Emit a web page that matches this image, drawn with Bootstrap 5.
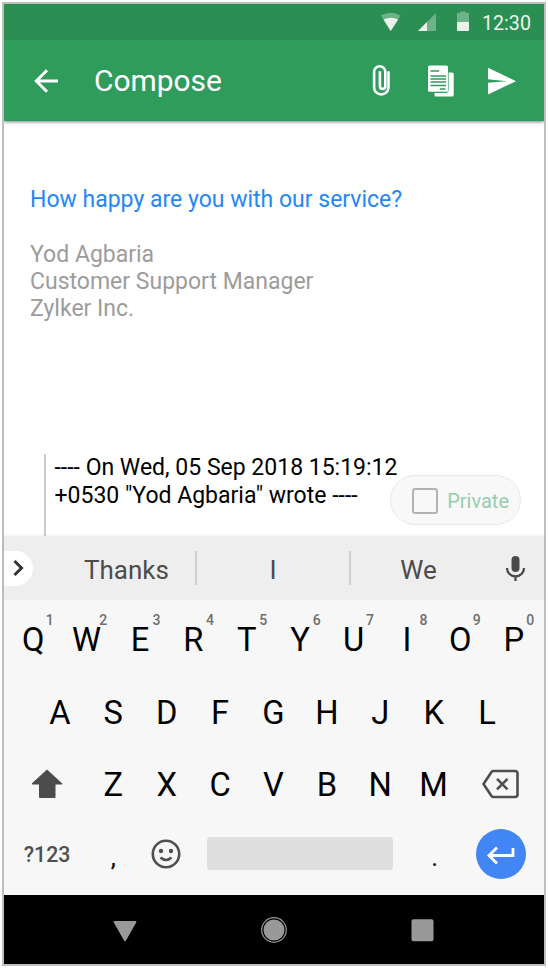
<!DOCTYPE html>
<html lang="en">
<head>
<meta charset="utf-8">
<meta name="viewport" content="width=device-width, initial-scale=1">
<title>Compose</title>
<link href="https://cdn.jsdelivr.net/npm/bootstrap@5.3.0/dist/css/bootstrap.min.css" rel="stylesheet">
<style>
body{font-family:Roboto,"Liberation Sans",sans-serif;background:#fff;color:#000;overflow:hidden}
.phone{width:544px;height:964px;margin:2px;border:2px solid #bfbfbf}
svg{display:block;flex:none}
.status{height:36px;background:#2b8f53;color:#e9f3ec;font-size:19.7px;padding-right:13px}
.status span{padding-top:3px}
.appbar{height:81px;background:#2f9c5c;color:#fff;box-shadow:0 1px 3px rgba(0,0,0,.5);clip-path:inset(0 0 -6px 0);z-index:1;padding:0 26px 0 28px}
.appbar h1{font-size:29.9px;margin-left:34px;line-height:1}
.mail{height:415px;padding:65px 0 0 26px;font-size:23px;line-height:27.4px}
.ask{color:#2587f5}
.sig{color:#9c9c9c;margin-top:27.2px}
.quote{height:82px;margin:131px 0 0 14px;border-left:2px solid #ccc;padding:.6px 0 0 8.5px;width:370px}
.private{right:23px;bottom:11px;width:131px;height:50px;border:1px solid #e8e8e8;border-radius:25px;background:#f8f8f8;color:#96cdae;font-size:20px;padding:1px 11px 0 21px}
.private b{padding-top:3px}
.tick{width:26px;height:26px;border:2.5px solid #b3b3b3;border-radius:3px}
.suggest{height:64px;background:#eee;color:#4c4c4c;font-size:26px;box-shadow:0 -1px 3px rgba(0,0,0,.06);z-index:1}
.more{width:29px;height:35px;background:#fff;border-radius:0 18px 18px 0;padding-left:9px}
.words{margin-right:18px}
.word{width:154px;height:34px;padding-top:4px}
.word.first{width:137px}
.word.third{width:137px}
.word+.word{border-left:2px solid #d0d0d0}
.keys{height:295px;background:#f7f7f7;padding:3px 2.5px 0}
.krow{height:72.5px}
.krow.last{height:66px}
.key{width:53.4px;font-size:32.7px;line-height:1;padding-top:2px}
.krow.home{padding-right:1px}
.krow.home .key{padding-top:3.500px}
.wide{width:80.1px}
.key sup{top:9.5px;right:6.2px;font-size:14px;font-weight:500;color:#6e6e6e;line-height:1}
.mode{width:80.1px;font-size:21.3px;font-weight:500;color:#4f4f4f;padding:3px 0 0 1px}
.punct{font-size:26px;padding-top:7px}
.smile{padding:0 1px 0 0}
.space{width:186px;height:33px;background:#dfdfdf;border-radius:4px;margin-left:13.5px}
.enter{width:50px;height:50px;background:#4286f5}
.navkeys{height:69px;background:#000}
</style>
</head>
<body>
<main class="phone d-flex flex-column position-relative">
  <div class="status d-flex align-items-center justify-content-end">
    <svg width="102" height="36" viewBox="0 0 102 36">
      <path d="M1 11.500Q11 6 20.500 11.500L10.700 27z" fill="#6fb289"/>
      <path d="M3.500 15.600Q10.700 12 18.200 15.600L10.700 27z" fill="#e9f3ec"/>
      <path d="M56 9v18H38z" fill="#6fb289"/><path d="M47 18v9h-9z" fill="#e9f3ec"/>
      <path d="M77 9h3V7.500h6V9h3v9H77z" fill="#6fb289"/>
      <path d="M77 18h12v8a1 1 0 0 1-1 1H78a1 1 0 0 1-1-1z" fill="#e9f3ec"/>
    </svg>
    <span>12:30</span>
  </div>
  <header class="appbar d-flex align-items-center position-relative">
    <svg width="28" height="28" viewBox="0 0 28 28" fill="none" stroke="#fff" stroke-width="3"><path d="M26 14H4.500M15 3.300L4.300 14 15 24.700"/></svg>
    <h1 class="fw-normal mb-0 me-auto">Compose</h1>
    <svg width="150" height="36" viewBox="0 0 150 36">
      <path d="M20.500 9v16a7.200 7.200 0 0 1-14.400 0V9.500a5.600 5.600 0 0 1 11.200 0v14.500a2.700 2.700 0 0 1-5.400 0V9" transform="translate(0 -.7)" fill="none" stroke="#fff" stroke-width="2.600"/>
      <path d="M66.500 30v2q0 1.500 1.500 1.500h16.200q1.500 0 1.500-1.500V11q0-1.500-1.500-1.500H79V30z" fill="#fff"/>
      <path d="M61.500 2.500h17q1.500 0 1.500 1.500v23.300q0 1.500-1.500 1.500h-17Q60 28.800 60 27.300V4Q60 2.500 61.500 2.500z" fill="#fff" stroke="#2f9c5c" stroke-width="1.200" paint-order="stroke"/>
      <path d="M62.500 8h8.500M62.500 13h15.500M62.500 16h15.500M62.500 19h15.500M62.500 22.500h15.500M72 26h5.500" stroke="#2f9c5c" stroke-width="1.300"/>
      <path d="M120 4.800L148 18.200 120 31.500V19.700L139 18.200 120 16.200z" fill="#fff"/>
    </svg>
  </header>
  <section class="mail position-relative">
    <div class="ask">How happy are you with our service?</div>
    <div class="sig">Yod Agbaria<br>Customer Support Manager<br>Zylker Inc.</div>
    <div class="quote text-nowrap">---- On Wed, 05 Sep 2018 15:19:12<br>+0530 "Yod Agbaria" wrote ----</div>
    <label class="private position-absolute d-flex align-items-center justify-content-between"><span class="tick"></span><b class="fw-normal">Private</b></label>
  </section>
  <div class="suggest d-flex align-items-center position-relative">
    <div class="more d-flex align-items-center"><svg width="12" height="18" viewBox="0 0 12 18" fill="none" stroke="#333" stroke-width="3"><path d="M1.500 2L8.500 9l-7 7"/></svg></div>
    <div class="words d-flex ms-auto">
      <div class="word first d-flex align-items-center justify-content-center">Thanks</div>
      <div class="word d-flex align-items-center justify-content-center">I</div>
      <div class="word third d-flex align-items-center justify-content-center">We</div>
    </div>
    <svg width="40" height="36" viewBox="0 0 40 36"><rect x="7.500" y="6" width="8" height="16" rx="4" fill="#4a4a4a"/><path d="M3 18a8.500 8.500 0 0 0 17 0M11.500 26v5" fill="none" stroke="#4a4a4a" stroke-width="2.300"/></svg>
  </div>
  <section class="keys">
    <div class="krow d-flex align-items-stretch">
      <div class="key d-flex align-items-center justify-content-center position-relative">Q<sup class="position-absolute">1</sup></div>
      <div class="key d-flex align-items-center justify-content-center position-relative">W<sup class="position-absolute">2</sup></div>
      <div class="key d-flex align-items-center justify-content-center position-relative">E<sup class="position-absolute">3</sup></div>
      <div class="key d-flex align-items-center justify-content-center position-relative">R<sup class="position-absolute">4</sup></div>
      <div class="key d-flex align-items-center justify-content-center position-relative">T<sup class="position-absolute">5</sup></div>
      <div class="key d-flex align-items-center justify-content-center position-relative">Y<sup class="position-absolute">6</sup></div>
      <div class="key d-flex align-items-center justify-content-center position-relative">U<sup class="position-absolute">7</sup></div>
      <div class="key d-flex align-items-center justify-content-center position-relative">I<sup class="position-absolute">8</sup></div>
      <div class="key d-flex align-items-center justify-content-center position-relative">O<sup class="position-absolute">9</sup></div>
      <div class="key d-flex align-items-center justify-content-center position-relative">P<sup class="position-absolute">0</sup></div>
    </div>
    <div class="krow home d-flex justify-content-center align-items-center text-center">
      <div class="key">A</div><div class="key">S</div><div class="key">D</div><div class="key">F</div><div class="key">G</div><div class="key">H</div><div class="key">J</div><div class="key">K</div><div class="key">L</div>
    </div>
    <div class="krow d-flex align-items-center text-center">
      <div class="wide d-flex justify-content-center"><svg width="32" height="30" viewBox="0 0 32 30"><path d="M16 .5L31 14.300q1 1.300-.5 1.300h-6v12.500q0 1-1 1H9q-1 0-1-1V15.600H1.500q-1.500 0-.500-1.300z" fill="#4c4c4c"/></svg></div>
      <div class="key">Z</div><div class="key">X</div><div class="key">C</div><div class="key">V</div><div class="key">B</div><div class="key">N</div><div class="key">M</div>
      <div class="wide d-flex justify-content-center"><svg width="38" height="30" viewBox="0 0 38 30" fill="none" stroke="#4f4f4f" stroke-width="2.600" stroke-linejoin="round"><path d="M12 2h22a2.500 2.500 0 0 1 2.500 2.500v21A2.500 2.500 0 0 1 34 28H12q-1 0-1.500-1L2.500 15 10.500 3q.5-1 1.500-1zM16 9.800l10.500 10.500M26.500 9.800L16 20.300"/></svg></div>
    </div>
    <div class="krow last d-flex align-items-center text-center">
      <div class="mode">?123</div>
      <div class="key punct">,</div>
      <div class="key smile d-flex justify-content-center"><svg width="30" height="30" viewBox="0 0 30 30" fill="none" stroke="#4f4f4f" stroke-width="2.600"><circle cx="15" cy="15" r="13.200"/><path d="M9.500 18.500q5.500 5 11 0"/><g fill="#4f4f4f" stroke="none"><circle cx="10" cy="12" r="2.200"/><circle cx="20" cy="12" r="2.200"/></g></svg></div>
      <div class="space"></div>
      <div class="key punct ms-auto">.</div>
      <div class="wide d-flex justify-content-center"><div class="enter rounded-circle d-flex align-items-center justify-content-center"><svg width="28" height="20" viewBox="0 0 28 20" fill="none" stroke="#fff" stroke-width="2.800"><path d="M26 4v7.500H2.500M10 3.500l-8 8 8 8"/></svg></div></div>
    </div>
  </section>
  <nav class="navkeys d-flex align-items-center justify-content-center">
    <svg width="324" height="28" viewBox="0 0 324 28" fill="#999">
      <path d="M2.500 5h21q1.500 0 .7 1.500L14 24.500q-1 1.500-2 0L1.800 6.500Q1 5 2.500 5z"/>
      <circle cx="162" cy="14" r="12.300" fill="none" stroke="#999" stroke-width="1.200"/><circle cx="162" cy="14" r="10.500"/>
      <rect x="299.500" y="3.300" width="22" height="22" rx="2"/>
    </svg>
  </nav>
</main>
<script src="https://cdn.jsdelivr.net/npm/bootstrap@5.3.0/dist/js/bootstrap.bundle.min.js"></script>
</body>
</html>
